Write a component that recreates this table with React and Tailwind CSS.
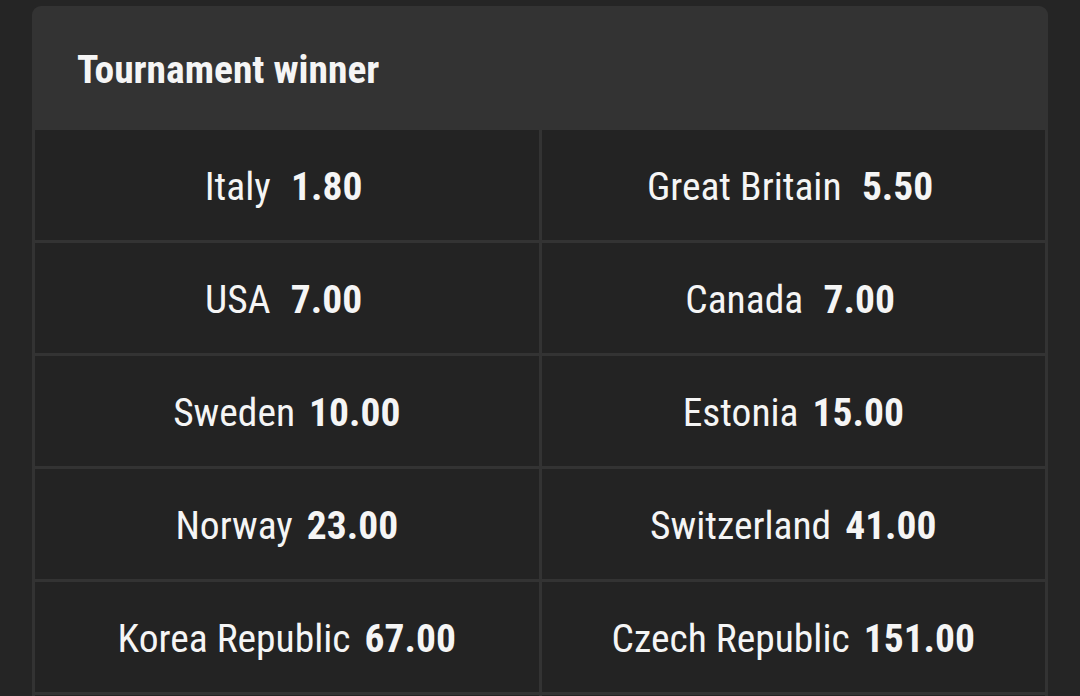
import React from "react";

const rows = [
  [["Italy", "1.80"], ["Great Britain", "5.50"]],
  [["USA", "7.00"], ["Canada", "7.00"]],
  [["Sweden", "10.00"], ["Estonia", "15.00"]],
  [["Norway", "23.00"], ["Switzerland", "41.00"]],
  [["Korea Republic", "67.00"], ["Czech Republic", "151.00"]],
];

function Cell({ name, odds }) {
  return (
    <div className="h-[110px] pt-[3px] bg-[#232323] flex items-center justify-center gap-[14px] text-[39.5px] leading-none text-[#f5f5f5]">
      <span className="font-normal">{name}</span>
      <span className="font-bold min-w-[84px] text-center">{odds}</span>
    </div>
  );
}

export default function App() {
  return (
    <div className="w-[1080px] h-[696px] overflow-hidden bg-[#252525] pt-[6px] font-['Roboto_Condensed','Roboto',sans-serif] font-stretch-condensed">
      <div className="mx-[32px] rounded-t-[9px] bg-[#333333]">
        <div className="h-[124px] pt-[3px] flex items-center pl-[45px]">
          <h1 className="text-[39.5px] font-bold leading-none text-[#f5f5f5]">Tournament winner</h1>
        </div>
        <div className="grid grid-cols-2 gap-[3px] px-[3px]">
          {rows.map((r, i) => (
            <React.Fragment key={i}>
              <Cell name={r[0][0]} odds={r[0][1]} />
              <Cell name={r[1][0]} odds={r[1][1]} />
            </React.Fragment>
          ))}
          <div className="h-[110px] bg-[#232323]" />
          <div className="h-[110px] bg-[#232323]" />
        </div>
      </div>
    </div>
  );
}
